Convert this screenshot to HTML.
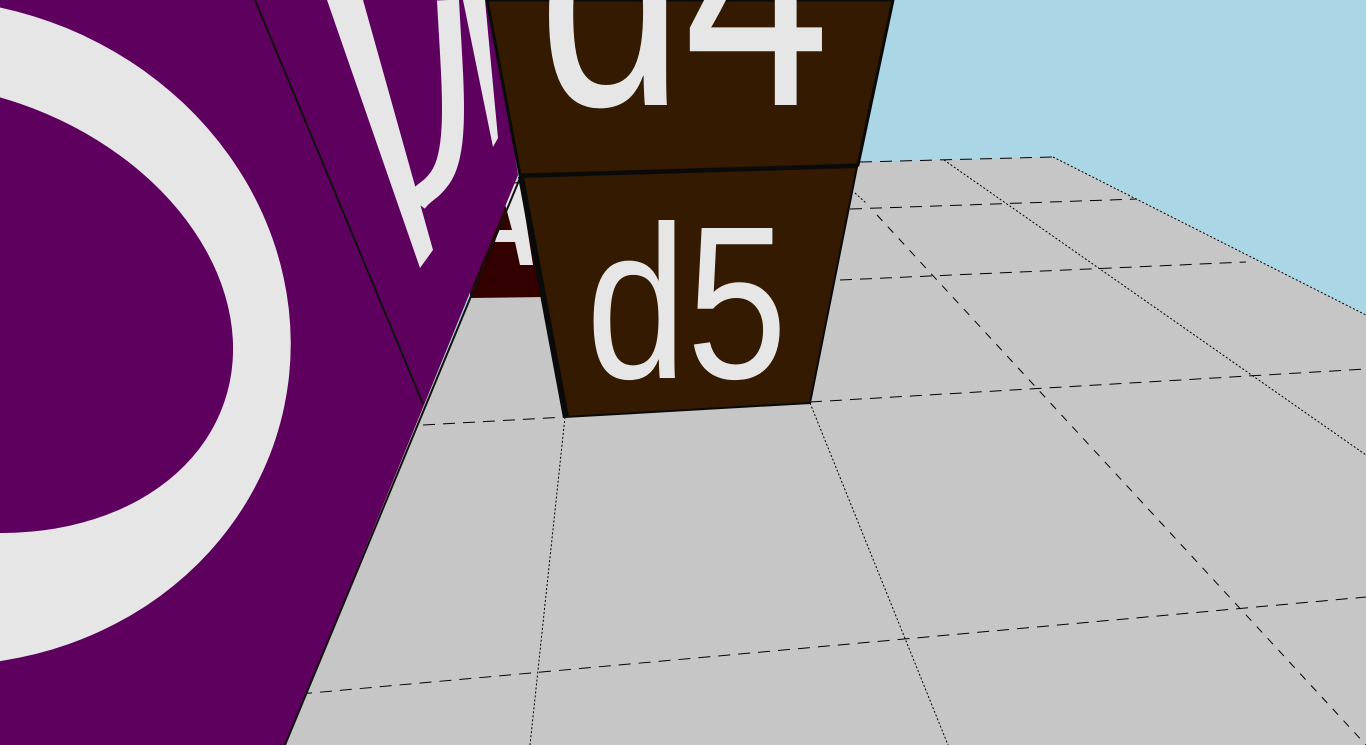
<!DOCTYPE html>
<html><head><meta charset="utf-8"><style>
html,body{margin:0;padding:0;width:1366px;height:745px;overflow:hidden;background:#abd6e6}
svg{display:block}
text{font-family:"Liberation Sans",sans-serif;fill:#e6e6e6}
</style></head><body>
<svg width="1366" height="745" viewBox="0 0 1366 745">
<rect width="1366" height="745" fill="#abd6e6"/>
<polygon points="860,162 1053,157 1366,315 1366,745 280,745 470,296 540,296" fill="#c6c6c6"/>
<g stroke="#000" stroke-width="1" fill="none" stroke-dasharray="12,8">
<line x1="860" y1="162" x2="1053" y2="157"/>
<line x1="850" y1="209" x2="1137" y2="199"/>
<line x1="840" y1="280" x2="1246" y2="262"/>
<line x1="423" y1="425" x2="565" y2="417"/>
<line x1="810" y1="402" x2="1366" y2="369"/>
<line x1="300" y1="694" x2="1366" y2="597"/>
<line x1="877" y1="215" x2="1366" y2="745" stroke-dasharray="8,8"/>
</g>
<g stroke="#000" stroke-width="1" fill="none" stroke-dasharray="2,2">
<line x1="1053" y1="157" x2="1366" y2="315"/>
<line x1="944" y1="160" x2="1366" y2="455"/>
<line x1="565" y1="417" x2="530" y2="745"/>
<line x1="810" y1="403" x2="948" y2="745"/>
<line x1="855" y1="193" x2="866" y2="203"/>
</g>
<polygon points="470,190 530,180 545,297 470,298" fill="#330000"/>
<polygon points="500,185 520,183 533,265 520,265 515,242 495,242 498,230 512,230" fill="#e6e6e6"/>
<polygon points="0,0 490,0 518,175 285,745 0,745" fill="#5e005e"/>
<clipPath id="pc"><polygon points="0,0 255,0 423,404 285,745 0,745"/></clipPath>
<g clip-path="url(#pc)">
<ellipse cx="-70" cy="332" rx="362" ry="332" transform="rotate(12 -70 332)" fill="#e6e6e6"/>
<ellipse cx="-50" cy="308" rx="290" ry="216" transform="rotate(19 -50 308)" fill="#5e005e"/>
</g>
<polygon points="327,0 363,0 433,250 420,268" fill="#e6e6e6"/>
<path d="M448,0 C452,80 460,150 440,178 C430,192 425,190 416,202" stroke="#e6e6e6" stroke-width="22" fill="none"/>
<polygon points="463,0 485,0 498,138 493,147" fill="#e6e6e6"/>
<line x1="255" y1="0" x2="423" y2="404" stroke="#111" stroke-width="2"/>
<line x1="520" y1="178" x2="285" y2="745" stroke="#111" stroke-width="2"/>
<polygon points="487,0 893,0 858,165 520,175" fill="#331a00" stroke="#0a0a0a" stroke-width="3"/>
<clipPath id="dc"><polygon points="487,0 893,0 858,165 520,175"/></clipPath>
<g clip-path="url(#dc)">
<text x="538" y="105" font-size="345" transform="translate(538 105) scale(0.76 1) translate(-538 -105)">d4</text>
</g>
<polygon points="520,177 857,167 810,403 565,417" fill="#331a00" stroke="#0a0a0a" stroke-width="2"/>
<polygon points="518,177 524,177 569,417 563,418" fill="#0a0a0a"/>
<text x="586" y="378" font-size="218" transform="translate(586 378) scale(0.83 1) translate(-586 -378)">d5</text>
</svg>
</body></html>
